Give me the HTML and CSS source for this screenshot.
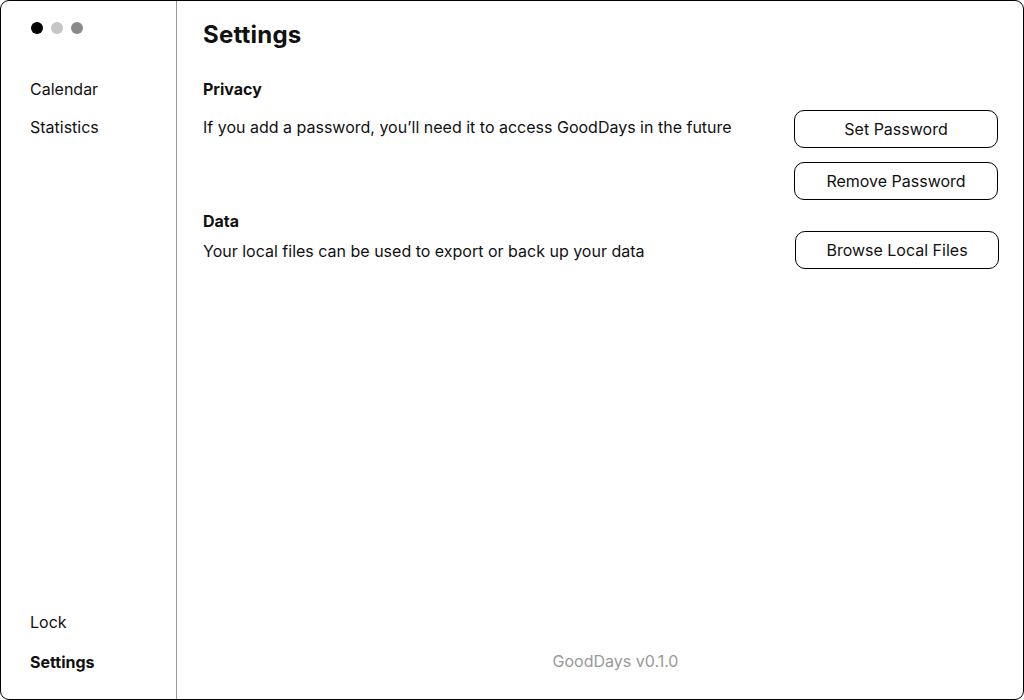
FILE: index.html
```html
<!DOCTYPE html>
<html lang="en">
<head>
<meta charset="utf-8">
<title>GoodDays – Settings</title>
<link rel="stylesheet" href="styles.css">
</head>
<body>
<div class="window">
  <aside class="sidebar">
    <div class="dots">
      <span class="dot dot-close"></span>
      <span class="dot dot-min"></span>
      <span class="dot dot-max"></span>
    </div>
    <nav class="nav-top">
      <a class="nav-item">Calendar</a>
      <a class="nav-item">Statistics</a>
    </nav>
    <nav class="nav-bottom">
      <a class="nav-item">Lock</a>
      <a class="nav-item active">Settings</a>
    </nav>
  </aside>
  <main class="main">
    <h1 class="title">Settings</h1>
    <section class="section privacy">
      <h2 class="section-title">Privacy</h2>
      <div class="row">
        <p class="desc">If you add a password, you’ll need it to access GoodDays in the future</p>
        <div class="actions">
          <button class="btn">Set Password</button>
          <button class="btn">Remove Password</button>
        </div>
      </div>
    </section>
    <section class="section data">
      <h2 class="section-title">Data</h2>
      <div class="row row-data">
        <p class="desc">Your local files can be used to export or back up your data</p>
        <div class="actions actions-data">
          <button class="btn">Browse Local Files</button>
        </div>
      </div>
    </section>
    <footer class="footer">GoodDays v0.1.0</footer>
  </main>
</div>
</body>
</html>
```

FILE: styles.css
```css
* { box-sizing: border-box; }
html, body { margin: 0; padding: 0; background: #fff; }
body {
  font-family: Inter, "Noto Sans", sans-serif;
  color: #111;
  width: 1024px;
  height: 700px;
}
.window {
  width: 1024px;
  height: 700px;
  border: 1px solid #000;
  border-radius: 9px;
  display: flex;
  overflow: hidden;
  background: #fff;
}
.sidebar {
  width: 176px;
  flex: none;
  border-right: 1px solid #999;
  display: flex;
  flex-direction: column;
  padding: 21px 0 0 29px;
}
.dots { display: flex; gap: 8px; height: 12px; }
.dot { width: 12px; height: 12px; border-radius: 50%; display: block; margin-left: 1px; }
.dot + .dot { margin-left: 0; }
.dot-close { background: #000; }
.dot-min { background: #c6c6c6; }
.dot-max { background: #8a8a8a; }
.nav-top { display: flex; flex-direction: column; gap: 18px; margin-top: 45px; }
.nav-bottom { display: flex; flex-direction: column; gap: 20px; margin-top: auto; margin-bottom: 27px; }
.nav-item { font-size: 16px; line-height: 20px; color: #111; }
.nav-item.active { font-weight: 700; }
.main {
  flex: 1;
  display: flex;
  flex-direction: column;
  padding: 19px 25px 0 26px;
}
.title { margin: 0; font-size: 24px; line-height: 30px; font-weight: 700; letter-spacing: 0.2px; }
.section-title { margin: 0; font-size: 16px; line-height: 20px; font-weight: 700; }
.privacy { margin-top: 29px; }
.privacy .row { margin-top: 11px; }
.row { display: flex; justify-content: space-between; align-items: flex-start; }
.desc { margin: 0; font-size: 16px; line-height: 20px; padding-top: 7px; }
.actions { display: flex; flex-direction: column; gap: 14px; width: 204px; }
.btn {
  height: 38px;
  width: 204px;
  border: 1px solid #000;
  border-radius: 10px;
  background: #fff;
  font-family: inherit;
  font-size: 16px;
  color: #111;
  padding: 0;
}
.data { margin-top: 11px; }
.row-data { margin-top: 0; }
.row-data .desc { padding-top: 10px; }
.actions-data { margin-right: -1px; }
.footer {
  margin-top: auto;
  margin-bottom: 28px;
  padding-left: 30px;
  text-align: center;
  font-size: 16px;
  line-height: 20px;
  color: #999;
}
```
